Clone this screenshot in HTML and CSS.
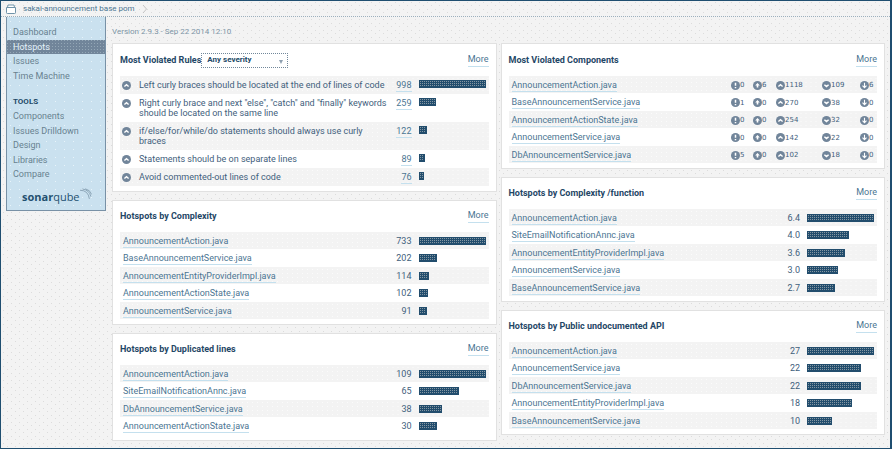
FILE: index.html
```html
<!DOCTYPE html>
<html lang="en">
<head>
<meta charset="utf-8">
<title>Hotspots</title>
<link rel="stylesheet" href="styles.css">
</head>
<body>
<svg class="sprite" aria-hidden="true">
  <symbol id="blocker" viewBox="0 0 9 9"><circle cx="4.5" cy="4.5" r="4.5" fill="#71859a"/><path d="M4.5 1.8v3M4.5 6v1.3" stroke="#fff" stroke-width="1.5"/></symbol>
  <symbol id="critical" viewBox="0 0 9 9"><circle cx="4.5" cy="4.5" r="4.5" fill="#71859a"/><path d="M4.5 2L6.800 4.5H5.3V6.500H3.7V4.5H2.200z" fill="#fff"/></symbol>
  <symbol id="major" viewBox="0 0 9 9"><circle cx="4.5" cy="4.5" r="4.5" fill="#71859a"/><path d="M2.400 5.6L4.5 3.7L6.600 5.6" fill="none" stroke="#fff" stroke-width="1.3"/></symbol>
  <symbol id="minor" viewBox="0 0 9 9"><circle cx="4.5" cy="4.5" r="4.5" fill="#71859a"/><path d="M2.400 3.7L4.5 5.6L6.600 3.7" fill="none" stroke="#fff" stroke-width="1.5"/></symbol>
  <symbol id="info" viewBox="0 0 9 9"><circle cx="4.5" cy="4.5" r="4.5" fill="#71859a"/><path d="M4.5 1.8v4.800M2.5 4.6L4.5 6.600L6.5 4.6" fill="none" stroke="#fff" stroke-width="1.1"/></symbol>
</svg>
<div class="window">
  <header class="crumbs">
    <svg class="box" viewBox="0 0 10 10" aria-hidden="true"><path d="M.5 3.5h9v5.2q0 .8-.8.8H1.300q-.8 0-.8-.8zM1.500 3.500L2 1h6l.5 2.500" fill="#fff" stroke="#6f93a9"/></svg>
    <a href="#">sakai-announcement base pom</a>
    <svg class="chevron" viewBox="0 0 6 10" aria-hidden="true"><path d="M1 1l3.500 4L1 9" fill="none" stroke="#c4c4c4"/></svg>
  </header>
  <div class="body">
    <nav class="sidebar">
      <ul>
        <li><a href="#">Dashboard</a></li>
        <li class="active"><a href="#">Hotspots</a></li>
        <li><a href="#">Issues</a></li>
        <li><a href="#">Time Machine</a></li>
      </ul>
      <h2>TOOLS</h2>
      <ul>
        <li><a href="#">Components</a></li>
        <li><a href="#">Issues Drilldown</a></li>
        <li><a href="#">Design</a></li>
        <li><a href="#">Libraries</a></li>
        <li><a href="#">Compare</a></li>
      </ul>
      <div class="logo"><span><b>sonar</b>qube</span><svg viewBox="0 0 16 15" aria-hidden="true"><path d="M0 2.500Q11 2.500 12.500 14M3 .8Q12.500 2 14.500 11M7 .5Q13.500 2 15.500 8" fill="none" stroke="#7893a6"/></svg></div>
    </nav>
    <main>
      <p class="version">Version 2.9.3 - Sep 22 2014 12:10</p>
      <div class="columns">
        <div class="column">
          <section class="panel first">
            <header><h3><label for="severity">Most Violated Rules</label></h3><span class="picker"><select id="severity"><option>Any severity</option></select></span><a class="more" href="#">More</a></header>
            <table class="rules">
              <colgroup><col class="sev"><col><col class="num"><col class="graph"></colgroup>
              <tr><td><svg><use href="#major"/></svg></td><td>Left curly braces should be located at the end of lines of code</td><td><a href="#">998</a></td><td><div class="bar" style="width:100%"></div></td></tr>
              <tr><td><svg><use href="#major"/></svg></td><td>Right curly brace and next "else", "catch" and "finally" keywords should be located on the same line</td><td><a href="#">259</a></td><td><div class="bar" style="width:26%"></div></td></tr>
              <tr><td><svg><use href="#major"/></svg></td><td>if/else/for/while/do statements should always use curly braces</td><td><a href="#">122</a></td><td><div class="bar" style="width:12%"></div></td></tr>
              <tr><td><svg><use href="#major"/></svg></td><td>Statements should be on separate lines</td><td><a href="#">89</a></td><td><div class="bar" style="width:9%"></div></td></tr>
              <tr><td><svg><use href="#major"/></svg></td><td>Avoid commented-out lines of code</td><td><a href="#">76</a></td><td><div class="bar" style="width:8%"></div></td></tr>
            </table>
          </section>
          <section class="panel">
            <header><h3>Hotspots by Complexity</h3><a class="more" href="#">More</a></header>
            <table class="files">
              <colgroup><col><col class="num"><col class="graph"></colgroup>
              <tr><td><a href="#">AnnouncementAction.java</a></td><td>733</td><td><div class="bar" style="width:100%"></div></td></tr>
              <tr><td><a href="#">BaseAnnouncementService.java</a></td><td>202</td><td><div class="bar" style="width:28%"></div></td></tr>
              <tr><td><a href="#">AnnouncementEntityProviderImpl.java</a></td><td>114</td><td><div class="bar" style="width:16%"></div></td></tr>
              <tr><td><a href="#">AnnouncementActionState.java</a></td><td>102</td><td><div class="bar" style="width:14%"></div></td></tr>
              <tr><td><a href="#">AnnouncementService.java</a></td><td>91</td><td><div class="bar" style="width:12%"></div></td></tr>
            </table>
          </section>
          <section class="panel">
            <header><h3>Hotspots by Duplicated lines</h3><a class="more" href="#">More</a></header>
            <table class="files">
              <colgroup><col><col class="num"><col class="graph"></colgroup>
              <tr><td><a href="#">AnnouncementAction.java</a></td><td>109</td><td><div class="bar" style="width:100%"></div></td></tr>
              <tr><td><a href="#">SiteEmailNotificationAnnc.java</a></td><td>65</td><td><div class="bar" style="width:60%"></div></td></tr>
              <tr><td><a href="#">DbAnnouncementService.java</a></td><td>38</td><td><div class="bar" style="width:35%"></div></td></tr>
              <tr><td><a href="#">AnnouncementActionState.java</a></td><td>30</td><td><div class="bar" style="width:28%"></div></td></tr>
            </table>
          </section>
        </div>
        <div class="column">
          <section class="panel first">
            <header><h3>Most Violated Components</h3><a class="more" href="#">More</a></header>
            <table class="files counts">
              <colgroup><col><col class="c1"><col class="c2"><col class="c3"><col class="c4"><col class="c5"></colgroup>
              <tr><td><a href="#">AnnouncementAction.java</a></td><td><svg><use href="#blocker"/></svg>0</td><td><svg><use href="#critical"/></svg>6</td><td><svg><use href="#major"/></svg>1118</td><td><svg><use href="#minor"/></svg>109</td><td><svg><use href="#info"/></svg>6</td></tr>
              <tr><td><a href="#">BaseAnnouncementService.java</a></td><td><svg><use href="#blocker"/></svg>1</td><td><svg><use href="#critical"/></svg>0</td><td><svg><use href="#major"/></svg>270</td><td><svg><use href="#minor"/></svg>38</td><td><svg><use href="#info"/></svg>0</td></tr>
              <tr><td><a href="#">AnnouncementActionState.java</a></td><td><svg><use href="#blocker"/></svg>0</td><td><svg><use href="#critical"/></svg>0</td><td><svg><use href="#major"/></svg>254</td><td><svg><use href="#minor"/></svg>32</td><td><svg><use href="#info"/></svg>0</td></tr>
              <tr><td><a href="#">AnnouncementService.java</a></td><td><svg><use href="#blocker"/></svg>0</td><td><svg><use href="#critical"/></svg>0</td><td><svg><use href="#major"/></svg>142</td><td><svg><use href="#minor"/></svg>22</td><td><svg><use href="#info"/></svg>0</td></tr>
              <tr><td><a href="#">DbAnnouncementService.java</a></td><td><svg><use href="#blocker"/></svg>5</td><td><svg><use href="#critical"/></svg>0</td><td><svg><use href="#major"/></svg>102</td><td><svg><use href="#minor"/></svg>18</td><td><svg><use href="#info"/></svg>0</td></tr>
            </table>
          </section>
          <section class="panel">
            <header><h3>Hotspots by Complexity /function</h3><a class="more" href="#">More</a></header>
            <table class="files">
              <colgroup><col><col class="num"><col class="graph"></colgroup>
              <tr><td><a href="#">AnnouncementAction.java</a></td><td>6.4</td><td><div class="bar" style="width:100%"></div></td></tr>
              <tr><td><a href="#">SiteEmailNotificationAnnc.java</a></td><td>4.0</td><td><div class="bar" style="width:63%"></div></td></tr>
              <tr><td><a href="#">AnnouncementEntityProviderImpl.java</a></td><td>3.6</td><td><div class="bar" style="width:56%"></div></td></tr>
              <tr><td><a href="#">AnnouncementService.java</a></td><td>3.0</td><td><div class="bar" style="width:47%"></div></td></tr>
              <tr><td><a href="#">BaseAnnouncementService.java</a></td><td>2.7</td><td><div class="bar" style="width:42%"></div></td></tr>
            </table>
          </section>
          <section class="panel">
            <header><h3>Hotspots by Public undocumented API</h3><a class="more" href="#">More</a></header>
            <table class="files">
              <colgroup><col><col class="num"><col class="graph"></colgroup>
              <tr><td><a href="#">AnnouncementAction.java</a></td><td>27</td><td><div class="bar" style="width:100%"></div></td></tr>
              <tr><td><a href="#">AnnouncementService.java</a></td><td>22</td><td><div class="bar" style="width:81%"></div></td></tr>
              <tr><td><a href="#">DbAnnouncementService.java</a></td><td>22</td><td><div class="bar" style="width:81%"></div></td></tr>
              <tr><td><a href="#">AnnouncementEntityProviderImpl.java</a></td><td>18</td><td><div class="bar" style="width:67%"></div></td></tr>
              <tr><td><a href="#">BaseAnnouncementService.java</a></td><td>10</td><td><div class="bar" style="width:37%"></div></td></tr>
            </table>
          </section>
        </div>
      </div>
    </main>
  </div>
</div>
</body>
</html>
```
FILE: styles.css
```css
* { box-sizing: border-box; }
body { margin: 0; font: 9px/11px Roboto, "Liberation Sans", sans-serif; color: #3f607c; }
h2, h3, p, ul { margin: 0; padding: 0; list-style: none; }
a { color: #4b7592; text-decoration: none; }
.sprite { position: absolute; width: 0; height: 0; }

.window {
  min-height: 100vh;
  border: 1px solid #1f4e70;
  border-right-width: 2px;
  background-color: #f3f3f3;
  background-image: conic-gradient(at 1px 1px, transparent 75%, #dcdcdc 0), conic-gradient(at 1px 1px, transparent 75%, #dcdcdc 0);
  background-position: 2px 1px, 6px 4px;
  background-size: 8px 7px;
}
.crumbs {
  display: flex;
  align-items: center;
  height: 16px;
  padding-left: 5px;
  border-bottom: 1px dotted #9db0bd;
  font-size: 8px;
}
.crumbs a { margin-left: 7px; }
.box { width: 10px; height: 10px; }
.chevron { width: 6px; height: 10px; margin-left: 7px; }

.body { display: flex; align-items: flex-start; }
.sidebar {
  flex: none;
  width: 100px;
  margin-left: 5px;
  padding-top: 8px;
  padding-bottom: 4px;
  border: solid #7891a6;
  border-width: 0 1px 1px;
  background: #cae1ef conic-gradient(at 1px 1px, transparent 75%, #e8f4fa 0) 3px 4px / 9px 8px;
}
.sidebar li { height: 15px; padding-left: 6px; line-height: 15px; }
.sidebar li:nth-child(even) { height: 14px; }
.sidebar a { color: #68818f; }
.sidebar .active {
  background: #71859a conic-gradient(at 1px 1px, transparent 75%, #94a7b6 0) 0 0 / 3px 3px;
}
.sidebar .active a { color: #e4f2fa; }
.sidebar h2 { padding: 13px 0 2px 6px; font-size: 8px; line-height: 11px; color: #234a68; }
.logo { display: flex; margin: 5px 0 0 15px; font: 11px/19px "Open Sans", sans-serif; color: #23506f; }
.logo svg { width: 12px; height: 14px; }

main { flex: 1; padding: 9px 5px 6px 6px; }
.version { font-size: 8px; line-height: 12px; color: #7d95a6; }
.columns { display: grid; grid-template-columns: 1fr 1fr; gap: 4px; margin-top: 5px; align-items: start; }
.column { display: grid; gap: 8px; }
.panel { padding: 0 7px 5px; border: 1px solid #e1e1e1; background: #fff; }
.panel header { display: flex; align-items: center; height: 31px; }
.first header { height: 32px; }
h3 { font-size: 9px; line-height: 11px; color: #1f4766; }
.more { margin-left: auto; }
.more, td a { padding-bottom: 1px; border-bottom: 1px solid #c4e0ee; }
.picker { position: relative; }
.picker::after {
  content: "";
  position: absolute;
  right: 5px;
  top: 7px;
  border: solid transparent;
  border-width: 4px 2px 0;
  border-top-color: #8fa0b0;
}
select {
  display: block;
  appearance: none;
  width: 87px;
  height: 15px;
  padding: 0 5px;
  border: 1px dotted #71879a;
  border-radius: 0;
  background: #fff;
  font: bold 8px/12px Roboto, sans-serif;
  color: #234a68;
}

table { width: 100%; table-layout: fixed; border-collapse: collapse; }
td { height: 17px; padding: 0; vertical-align: middle; white-space: nowrap; line-height: 10px; }
tr:nth-child(even) td { height: 18px; }
tr:nth-child(odd) { background: #f3f3f3 conic-gradient(at 1px 1px, transparent 75%, #fbfbfb 0) 2px 2px / 5px 4px; }
td svg { display: inline-block; width: 9px; height: 9px; vertical-align: middle; }
.num { width: 23px; }
.graph { width: 77px; }
.sev { width: 19px; }
.files td:first-child { padding-left: 3px; }
.files:not(.counts) td:nth-child(2), .rules td:nth-child(3) { text-align: right; }
.files:not(.counts) td:last-child, .rules td:last-child { padding: 0 3px 0 7px; }
.rules td { vertical-align: top; padding-top: 4px; }
.rules td:first-child { padding-left: 2px; }
.rules td:nth-child(2) { white-space: normal; padding-bottom: 4px; }
.rules tr td:last-child { padding-top: 4px; }
.rules tr:last-child td { height: 18px; }
.bar {
  height: 8px;
  border: 1px solid #224d6d;
  background: #224d6d conic-gradient(at 1px 1px, transparent 75%, #8496a2 0) 0 0 / 2px 2px;
}
.counts td:not(:first-child) { padding-top: 1px; font: 7px/10px "DejaVu Sans", sans-serif; }
.c1 { width: 22px; }
.c2 { width: 23px; }
.c3 { width: 46px; }
.c4 { width: 38px; }
.c5 { width: 17px; }
```
